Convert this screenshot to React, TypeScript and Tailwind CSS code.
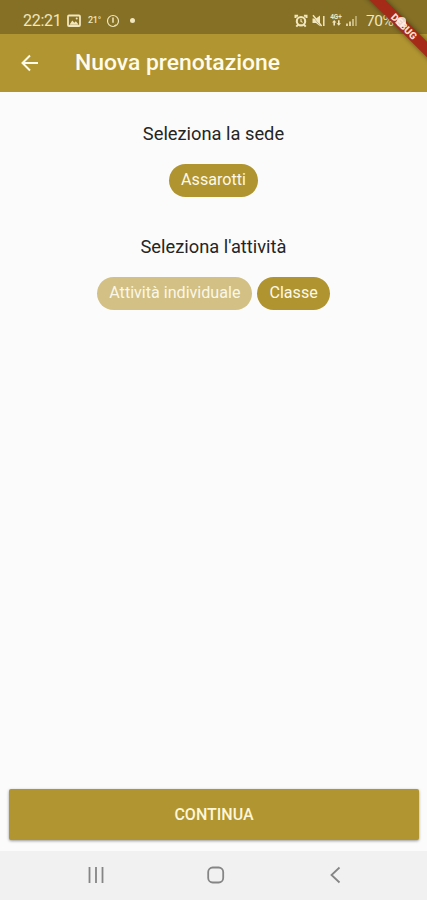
import type { ReactNode } from "react"
import clsx from "clsx"

const StatusBar = () => (
  <div className="flex h-[34px] shrink-0 items-start bg-[#857025] pl-[23px] pt-[11px] text-[#f1e6bd]">
    <span className="w-[44px] text-[16px] leading-5 tracking-[-0.3px]">22:21</span>

    <svg className="mt-[3px]" width="14" height="14" viewBox="0 0 14 14" fill="none">
      <rect x="1" y="1.500" width="12" height="10.500" rx="1" stroke="currentColor" strokeWidth="1.800" />
      <path d="M2.500 10.800 5.300 6.600l2 2.100 1.600-1.500 2.800 3.600z" fill="currentColor" />
      <circle cx="9.700" cy="4.600" r="1" fill="currentColor" />
    </svg>

    <span className="ml-[7px] w-[18px] text-[9px] font-medium leading-[19px] tracking-[-0.3px]">21°</span>

    <svg className="mt-[3px]" width="14" height="14" viewBox="0 0 14 14" fill="none" stroke="currentColor">
      <circle cx="7" cy="7" r="5.500" strokeWidth="1.200" />
      <path d="M7 3.400v5.400" strokeWidth="1.500" />
      <path d="M9.800 10.800l-1.500.8" strokeWidth="1" />
    </svg>

    <span className="ml-[10px] mt-[7px] size-[5px] rounded-full bg-[#f1e6bd]" />

    <div className="ml-auto flex w-[133px] items-start">
      <svg className="mt-[3px]" width="14" height="14" viewBox="0 0 14 14" fill="none" stroke="currentColor">
        <path d="M1.500 4V1.800h2.600M12.500 4V1.800H9.900M2.300 12.600l1.800-2M11.700 12.600l-1.800-2" strokeWidth="2" />
        <circle cx="7" cy="7.200" r="4.200" strokeWidth="2.100" />
        <path d="M7 4.800v2.600l1.700 1" strokeWidth="1.100" />
      </svg>

      <svg className="ml-[4px] mt-[3px]" width="14" height="14" viewBox="0 0 14 14">
        <path d="M0.500 4.500h3.500l4-3v10.800L4 9H0.500z" fill="currentColor" />
        <path d="M1 2.400 8.600 12" stroke="#857025" strokeWidth="0.8" />
        <path d="M1 1.200 9.600 12M11.800 2v10" stroke="currentColor" strokeWidth="1.500" />
      </svg>

      <div className="ml-[3px] mt-[3px] flex w-[14px] flex-col items-center">
        <span className="text-[6.500px] font-bold leading-[6px]">4G+</span>
        <svg width="9" height="6" viewBox="0 0 9 6" fill="currentColor">
          <path d="M0 2.600 2.200 0l2.200 2.600H3v3H1.400v-3zM4.600 3.200H6v-3h1.600v3H9L6.800 5.800z" />
        </svg>
      </div>

      <svg className="ml-[3px] mt-[3px]" width="12" height="13" viewBox="0 0 12 13" fill="currentColor">
        <path d="M0 9.500h2V12H0zM3 7.500h2V12H3z" opacity="0.8" />
        <path d="M6 5h2v7H6z" opacity="0.6" />
        <path d="M9 2h2v10H9z" opacity="0.45" />
      </svg>

      <span className="ml-[8px] text-[15.500px] leading-5 tracking-[-0.4px]">70%</span>
    </div>
  </div>
)

const DebugBanner = () => (
  <div className="pointer-events-none absolute right-0 top-0 size-[92px] overflow-hidden">
    <div className="absolute left-[9px] top-[20.5px] h-[11px] w-[120px] rotate-45 bg-[#a52a18] text-center text-[10px] font-black leading-[11px] text-[#f7dfd2] shadow-[0_0_5px_rgba(0,0,0,0.45)]">
      DEBUG
    </div>
    {/* battery, shows through the ribbon */}
    <div className="absolute left-[62px] top-[17px] h-[10px] w-[9px] rounded-[4px] bg-[#fbeee6] opacity-85" />
  </div>
)

const Chip = ({ children, faded }: { children: ReactNode; faded?: boolean }) => (
  <button
    className={clsx(
      "flex h-[33px] items-center rounded-full px-3 pb-px text-[16.1px]",
      faded ? "bg-[#d2c084] text-[#fbf7e8]" : "bg-[#b09430] text-[#fdf9e9]"
    )}
  >
    {children}
  </button>
)

const App = () => {
  return (
    <div className="relative flex h-[900px] w-[427px] flex-col overflow-hidden bg-[#fbfbfb] font-['Roboto',sans-serif]">
      <StatusBar />

      <header className="flex h-[58px] shrink-0 items-center bg-[#b19530] pl-[20px] text-[#fffbea]">
        <svg width="20" height="20" viewBox="0 0 20 20" fill="none" stroke="currentColor" strokeWidth="2">
          <path d="M18 10H3M10 2.500 2.500 10l7.500 7.500" />
        </svg>
        <h1 className="ml-[35px] text-[22.9px] font-medium leading-7">Nuova prenotazione</h1>
      </header>

      <main className="flex flex-1 flex-col items-center pt-[30px]">
        <h2 className="text-[18.3px] leading-6 text-[#252525]">Seleziona la sede</h2>
        <div className="mt-[18px] flex">
          <Chip>Assarotti</Chip>
        </div>

        <h2 className="mt-[38px] text-[18.3px] leading-6 text-[#252525]">Seleziona l'attività</h2>
        <div className="mt-[18px] flex gap-[5px]">
          <Chip faded>Attività individuale</Chip>
          <Chip>Classe</Chip>
        </div>
      </main>

      <div className="pb-[11px] pl-[9px] pr-[8px]">
        <button className="h-[51px] w-full rounded-[2px] bg-[#b19530] text-[16px] font-medium text-[#fdf6d8] shadow-[0_1px_3px_rgba(0,0,0,0.4)]">
          CONTINUA
        </button>
      </div>

      <nav className="flex h-[49px] shrink-0 items-center bg-[#f1f1f1] pb-[2px] pl-[86px] text-[#858585]">
        <svg width="20" height="20" viewBox="0 0 20 20" stroke="currentColor" strokeWidth="1.800">
          <path d="M3.500 2v16M10 2v16M16.500 2v16" />
        </svg>
        <svg className="ml-[100px]" width="20" height="20" viewBox="0 0 20 20" fill="none" stroke="currentColor" strokeWidth="1.800">
          <rect x="2.200" y="2.500" width="15" height="15" rx="4.500" />
        </svg>
        <svg className="ml-[100px]" width="20" height="20" viewBox="0 0 20 20" fill="none" stroke="currentColor" strokeWidth="1.800">
          <path d="M13.500 2.500 5.500 10l8 7.500" />
        </svg>
      </nav>

      <DebugBanner />
    </div>
  )
}

export default App
